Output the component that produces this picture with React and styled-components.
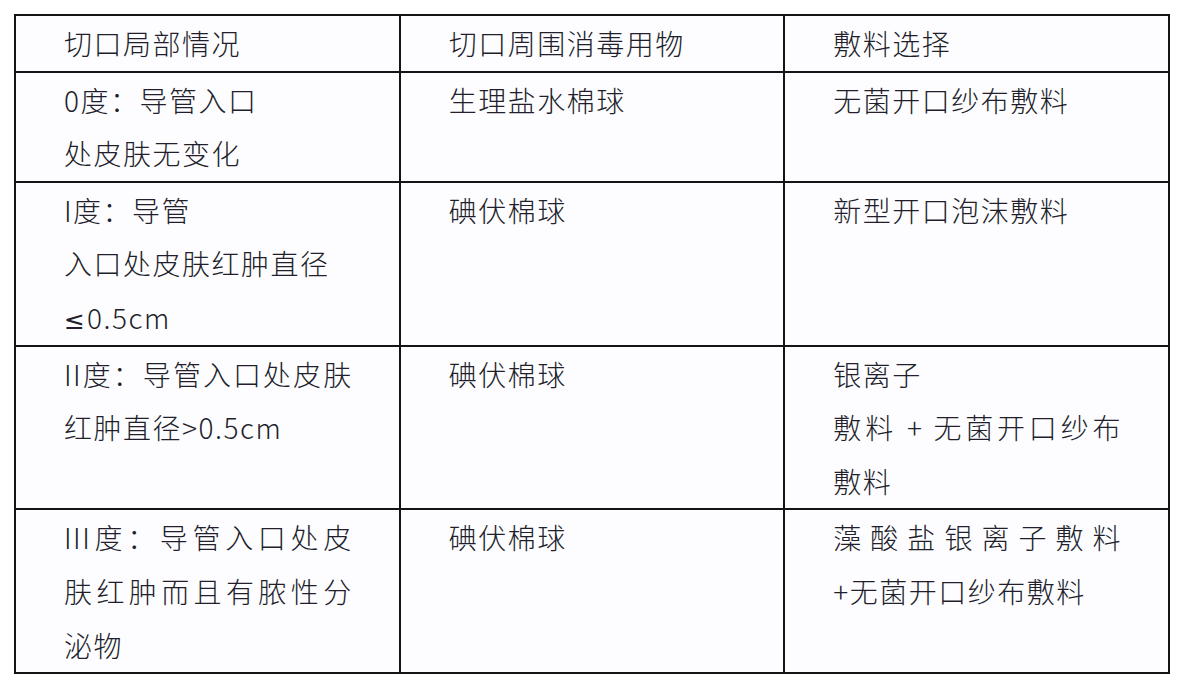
import React from 'react'
import styled, { createGlobalStyle } from 'styled-components'

const GlobalStyle = createGlobalStyle`
  html, body {
    margin: 0;
    padding: 0;
    background: #ffffff;
  }
  body {
    font-family: "Noto Sans CJK SC", "Noto Sans", sans-serif;
  }
`

const Page = styled.div`
  padding: 14px 0 0 14px;
`

const Table = styled.table`
  width: 1156px;
  border-collapse: collapse;
  table-layout: fixed;
  background: #fdfdff;
  color: #221e2b;
  font-size: 28px;
  font-weight: 300;
  letter-spacing: 1.5px;
`

const Cell = styled.td`
  border: 2px solid #141414;
  padding: 1px 46px 0 48px;
  vertical-align: top;
  line-height: 53.6px;
  height: ${(p) => p.lines * 53.6}px;
`

const HeadCell = styled(Cell).attrs({ as: 'th' })`
  font-weight: 300;
  text-align: left;
`

const Line = styled.span`
  display: block;
  white-space: nowrap;
  text-align: ${(p) => (p.$justify ? 'justify' : 'left')};
  text-align-last: ${(p) => (p.$justify ? 'justify' : 'auto')};
  ${(p) => (p.$justify ? 'white-space: normal;' : '')}
`

const MathSign = styled.span`
  font-family: "DejaVu Sans", sans-serif;
  font-weight: 400;
  font-size: 25px;
  line-height: 0;
  letter-spacing: 2px;
`

const rows = [
  {
    lines: 2,
    cells: [
      [{ t: '0度：导管入口' }, { t: '处皮肤无变化' }],
      [{ t: '生理盐水棉球' }],
      [{ t: '无菌开口纱布敷料' }],
    ],
  },
  {
    lines: 3,
    cells: [
      [{ t: 'I度：导管' }, { t: '入口处皮肤红肿直径' }, { t: '0.5cm', sign: '≤' }],
      [{ t: '碘伏棉球' }],
      [{ t: '新型开口泡沫敷料' }],
    ],
  },
  {
    lines: 3,
    cells: [
      [{ t: 'II度：导管入口处皮肤', j: true }, { t: '红肿直径>0.5cm' }],
      [{ t: '碘伏棉球' }],
      [{ t: '银离子' }, { t: '敷料 + 无菌开口纱布', j: true }, { t: '敷料' }],
    ],
  },
  {
    lines: 3,
    cells: [
      [{ t: 'III度：导管入口处皮', j: true }, { t: '肤红肿而且有脓性分', j: true }, { t: '泌物' }],
      [{ t: '碘伏棉球' }],
      [{ t: '藻酸盐银离子敷料', j: true }, { t: ' +无菌开口纱布敷料' }],
    ],
  },
]

export default function App() {
  return (
    <Page>
      <GlobalStyle />
      <Table>
        <thead>
          <tr>
            <HeadCell lines={1}>切口局部情况</HeadCell>
            <HeadCell lines={1}>切口周围消毒用物</HeadCell>
            <HeadCell lines={1}>敷料选择</HeadCell>
          </tr>
        </thead>
        <tbody>
          {rows.map((row, i) => (
            <tr key={i}>
              {row.cells.map((cell, k) => (
                <Cell key={k} lines={row.lines}>
                  {cell.map((l, n) => (
                    <Line key={n} $justify={l.j}>
                      {l.sign && <MathSign>{l.sign}</MathSign>}
                      {l.t}
                    </Line>
                  ))}
                </Cell>
              ))}
            </tr>
          ))}
        </tbody>
      </Table>
    </Page>
  )
}
